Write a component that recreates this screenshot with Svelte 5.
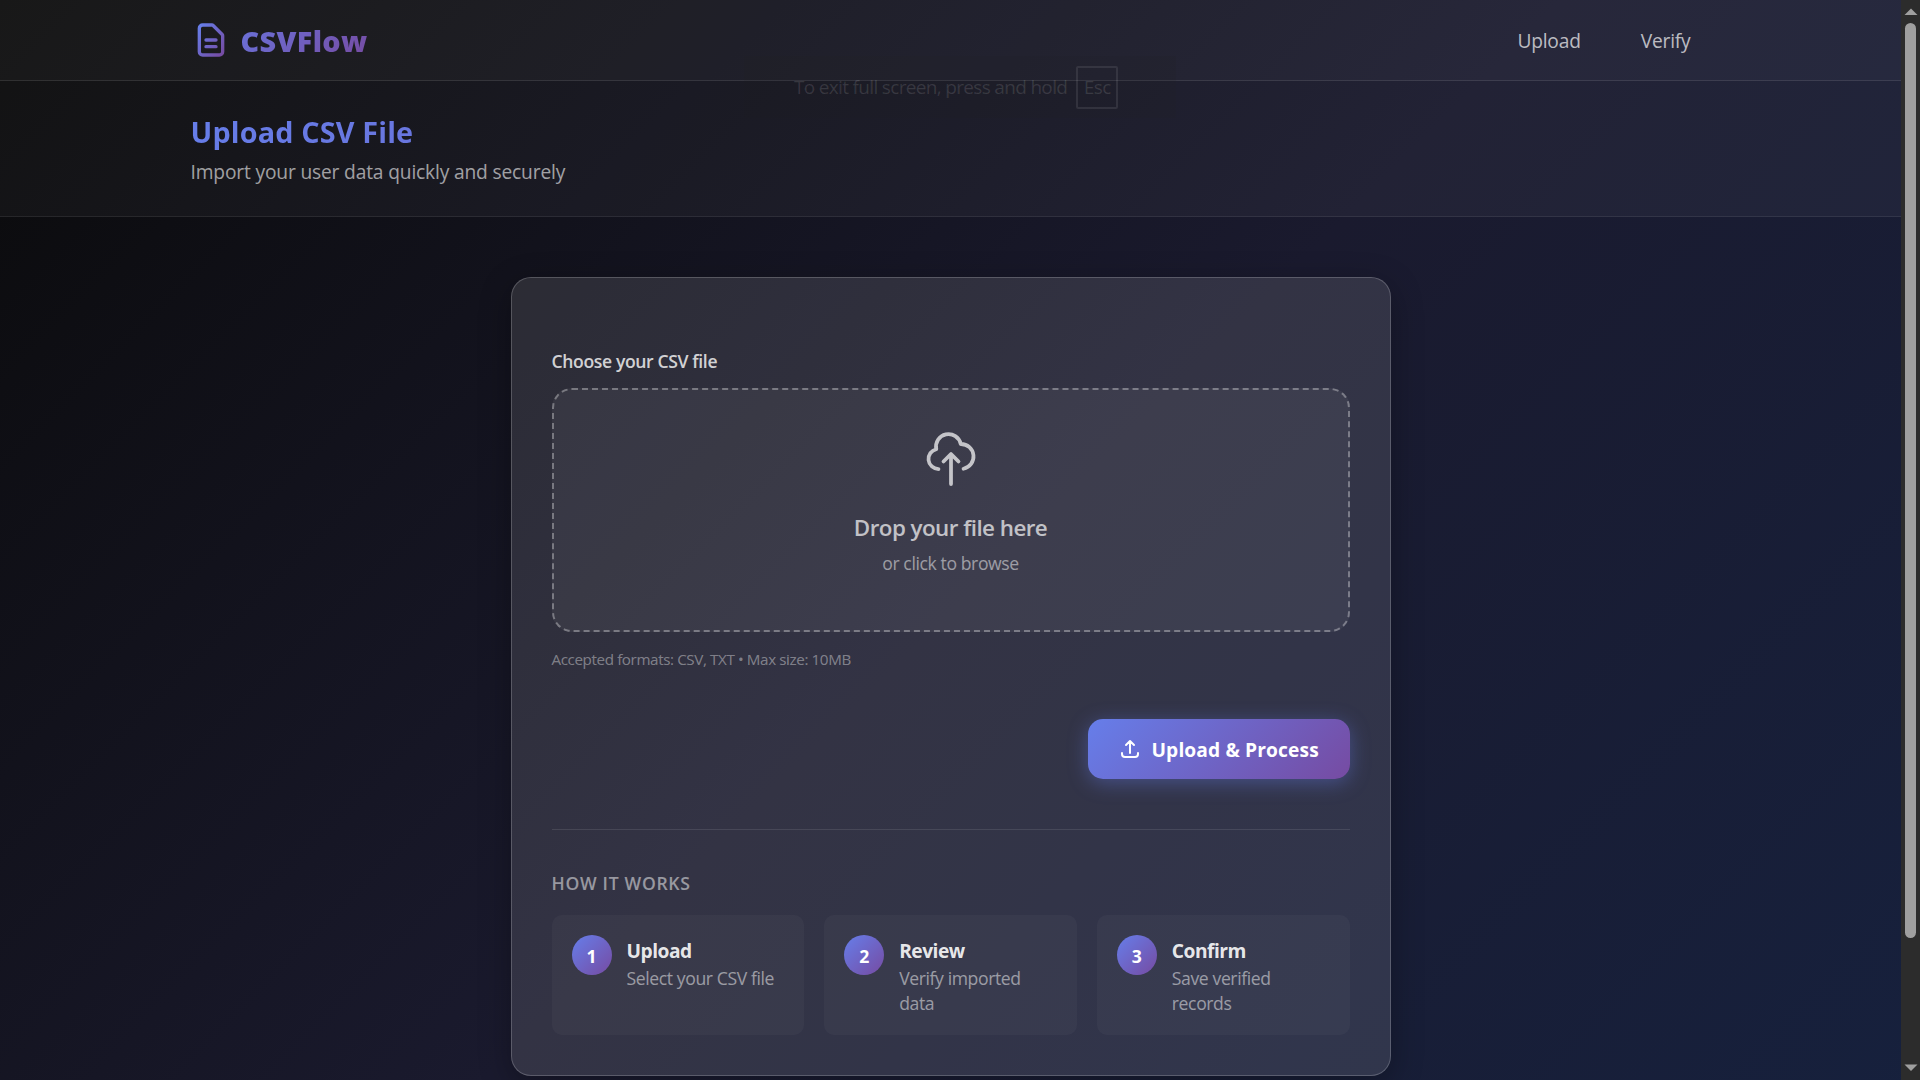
<script lang="ts">
  interface Step { title: string; text: string }

  const links = ['Upload', 'Verify'];

  const steps: Step[] = [
    { title: 'Upload', text: 'Select your CSV file' },
    { title: 'Review', text: 'Verify imported data' },
    { title: 'Confirm', text: 'Save verified records' },
  ];
</script>

<div class="window">
  <div class="viewport">
    <div class="page">
      <nav class="navbar">
        <div class="container nav-inner">
          <div class="logo">
            <svg width="40" height="40" viewBox="0 0 24 24" fill="none">
              <defs>
                <linearGradient id="logo-gradient" x1="0%" y1="0%" x2="100%" y2="100%">
                  <stop offset="0%" stop-color="#667eea" />
                  <stop offset="100%" stop-color="#764ba2" />
                </linearGradient>
              </defs>
              <path
                d="M9 12h6m-6 4h6m2 5H7a2 2 0 01-2-2V5a2 2 0 012-2h5.586a1 1 0 01.707.293l5.414 5.414a1 1 0 01.293.707V19a2 2 0 01-2 2z"
                stroke="url(#logo-gradient)"
                stroke-width="2"
                stroke-linecap="round"
                stroke-linejoin="round"
              />
            </svg>
            <span>CSVFlow</span>
          </div>
          <div class="links">
            {#each links as link}
              <span>{link}</span>
            {/each}
          </div>
        </div>
      </nav>

      <header class="page-header">
        <div class="container">
          <h1>Upload CSV File</h1>
          <p>Import your user data quickly and securely</p>
        </div>
      </header>

      <main class="card">
        <div class="label">Choose your CSV file</div>
        <div class="dropzone">
          <svg width="60" height="60" viewBox="0 0 24 24" fill="none" stroke="currentColor" stroke-width="1.5" stroke-linecap="round" stroke-linejoin="round">
            <path d="M7 16a4 4 0 01-.88-7.903A5 5 0 1115.9 6L16 6a5 5 0 011 9.9M15 13l-3-3m0 0l-3 3m3-3v12" />
          </svg>
          <span class="drop-title">Drop your file here</span>
          <span class="drop-hint">or click to browse</span>
        </div>
        <div class="formats">Accepted formats: CSV, TXT • Max size: 10MB</div>

        <div class="actions">
          <button class="submit">
            <svg width="24" height="24" viewBox="0 0 24 24" fill="none" stroke="currentColor" stroke-width="2" stroke-linecap="round" stroke-linejoin="round">
              <path d="M4 16v1a3 3 0 003 3h10a3 3 0 003-3v-1m-4-8l-4-4m0 0L8 8m4-4v12" />
            </svg>
            <span>Upload &amp; Process</span>
          </button>
        </div>

        <section class="how">
          <h2>HOW IT WORKS</h2>
          <div class="steps">
            {#each steps as step, i}
              <div class="step">
                <div class="number">{i + 1}</div>
                <div>
                  <h3>{step.title}</h3>
                  <p>{step.text}</p>
                </div>
              </div>
            {/each}
          </div>
        </section>
      </main>
    </div>
  </div>

  <div class="scrollbar">
    <svg width="14" height="8" viewBox="0 0 14 8"><path d="M7 0.5L13.5 7H0.5z" fill="#9f9f9f" /></svg>
    <div class="thumb"></div>
    <svg class="down" width="14" height="8" viewBox="0 0 14 8"><path d="M0.5 0.5h13L7 7z" fill="#9f9f9f" /></svg>
  </div>

  <div class="exit-hint">
    <span>To exit full screen, press and hold</span>
    <kbd>Esc</kbd>
  </div>
</div>

<style>
  :global(body) {
    margin: 0;
    overflow: hidden;
  }
  .window {
    position: relative;
    display: flex;
    width: 1920px;
    height: 1080px;
    overflow: hidden;
    font-family: 'Open Sans', 'Noto Sans', sans-serif;
    color: #fff;
  }
  .viewport {
    flex: 1;
    overflow: hidden;
  }
  .page {
    height: 1226px;
    background: linear-gradient(135deg, #0a0a0a 0%, #1a1a2e 50%, #16213e 100%);
  }
  h1, h2, h3, p {
    margin: 0;
  }
  .container {
    width: 1520px;
    margin: 0 auto;
  }
  .navbar {
    background: rgba(255, 255, 255, 0.06);
    border-bottom: 1px solid rgba(255, 255, 255, 0.1);
  }
  .nav-inner {
    display: flex;
    align-items: center;
    justify-content: space-between;
    height: 80px;
  }
  .logo {
    display: flex;
    align-items: center;
    gap: 10px;
    font-size: 28.8px;
    font-weight: 800;
    letter-spacing: 0.35px;
    background: linear-gradient(135deg, #667eea 0%, #764ba2 100%);
    background-clip: text;
    -webkit-background-clip: text;
    color: transparent;
  }
  .links {
    display: flex;
    gap: 60px;
    padding-right: 20px;
    font-size: 19.2px;
    font-weight: 500;
    letter-spacing: -0.2px;
    color: rgba(255, 255, 255, 0.7);
  }
  .page-header {
    height: 135px;
    background: rgba(255, 255, 255, 0.035);
    border-bottom: 1px solid rgba(255, 255, 255, 0.08);
  }
  .page-header .container {
    padding-top: 29px;
  }
  h1 {
    font-size: 28.8px;
    line-height: 43px;
    font-weight: 700;
    letter-spacing: 0.15px;
    background: linear-gradient(135deg, #667eea 0%, #764ba2 100%);
    background-clip: text;
    -webkit-background-clip: text;
    color: transparent;
  }
  .page-header p {
    font-size: 19.2px;
    line-height: 38px;
    letter-spacing: -0.16px;
    color: rgba(255, 255, 255, 0.6);
  }
  .card {
    box-sizing: border-box;
    width: 880px;
    height: 799px;
    margin: 60px auto 0;
    padding: 69px 40px 40px;
    border: 1px solid rgba(255, 255, 255, 0.2);
    border-radius: 20px;
    background: rgba(255, 255, 255, 0.11);
    box-shadow: 0 8px 32px rgba(0, 0, 0, 0.3);
  }
  .label {
    height: 41px;
    line-height: 28px;
    font-size: 17.6px;
    font-weight: 600;
    letter-spacing: -0.38px;
    color: rgba(255, 255, 255, 0.8);
  }
  .dropzone {
    box-sizing: border-box;
    display: flex;
    flex-direction: column;
    align-items: center;
    height: 244px;
    padding-top: 39px;
    border: 2px dashed rgba(255, 255, 255, 0.33);
    border-radius: 20px;
    background: rgba(255, 255, 255, 0.05);
    color: rgba(255, 255, 255, 0.7);
  }
  .drop-title {
    margin-top: 21px;
    font-size: 22.4px;
    line-height: 36px;
    font-weight: 600;
    letter-spacing: -0.55px;
  }
  .drop-hint {
    margin-top: 3px;
    font-size: 17.6px;
    line-height: 28px;
    letter-spacing: -0.4px;
    color: rgba(255, 255, 255, 0.5);
  }
  .formats {
    margin-top: 15px;
    font-size: 15.2px;
    line-height: 24px;
    letter-spacing: -0.39px;
    color: rgba(255, 255, 255, 0.4);
  }
  .actions {
    display: flex;
    justify-content: flex-end;
    margin-top: 48px;
  }
  .submit {
    display: flex;
    align-items: center;
    gap: 10px;
    width: 262px;
    height: 60px;
    padding: 0 30px;
    border: none;
    border-radius: 15px;
    background: linear-gradient(135deg, #667eea 0%, #764ba2 100%);
    box-shadow: 0 4px 20px rgba(102, 126, 234, 0.4);
    color: #fff;
    font-family: inherit;
    font-size: 19.2px;
    font-weight: 700;
    letter-spacing: 0.12px;
    white-space: nowrap;
  }
  .submit svg {
    flex: none;
  }
  .how {
    margin-top: 50px;
    padding-top: 39px;
    border-top: 1px solid rgba(255, 255, 255, 0.1);
  }
  h2 {
    height: 46px;
    font-size: 17.6px;
    line-height: 28px;
    font-weight: 600;
    letter-spacing: 0.7px;
    color: rgba(255, 255, 255, 0.5);
  }
  .steps {
    display: grid;
    grid-template-columns: repeat(3, 1fr);
    gap: 20px;
  }
  .step {
    box-sizing: border-box;
    display: flex;
    gap: 15px;
    height: 120px;
    padding: 20px;
    border-radius: 10px;
    background: rgba(255, 255, 255, 0.03);
  }
  .number {
    flex: none;
    width: 40px;
    height: 40px;
    border-radius: 50%;
    background: linear-gradient(135deg, #667eea 0%, #764ba2 100%);
    font-size: 17.6px;
    line-height: 42px;
    font-weight: 700;
    text-align: center;
  }
  h3 {
    font-size: 19.2px;
    line-height: 31px;
    font-weight: 700;
    letter-spacing: -0.5px;
    color: rgba(255, 255, 255, 0.9);
  }
  .step p {
    font-size: 17.6px;
    line-height: 25px;
    letter-spacing: -0.4px;
    color: rgba(255, 255, 255, 0.5);
  }
  .scrollbar {
    display: flex;
    flex-direction: column;
    align-items: center;
    width: 19px;
    box-sizing: border-box;
    padding: 8px 0;
    background: #2c2c2c;
  }
  .thumb {
    width: 11px;
    height: 915px;
    margin-top: 7px;
    border-radius: 6px;
    background: #9f9f9f;
  }
  .down {
    margin-top: auto;
  }
  /* fading browser notice over the top of the page */
  .exit-hint {
    position: absolute;
    top: 56px;
    left: 744px;
    display: flex;
    align-items: center;
    gap: 9px;
    box-sizing: border-box;
    width: 432px;
    height: 62px;
    padding-left: 50px;
    background: rgba(32, 33, 36, 0.12);
    font-size: 19px;
    letter-spacing: -0.67px;
    color: rgba(255, 255, 255, 0.12);
  }
  kbd {
    box-sizing: border-box;
    width: 42px;
    height: 43px;
    border: 2px solid rgba(255, 255, 255, 0.09);
    border-radius: 2px;
    font-family: inherit;
    line-height: 38px;
    text-align: center;
  }
</style>
